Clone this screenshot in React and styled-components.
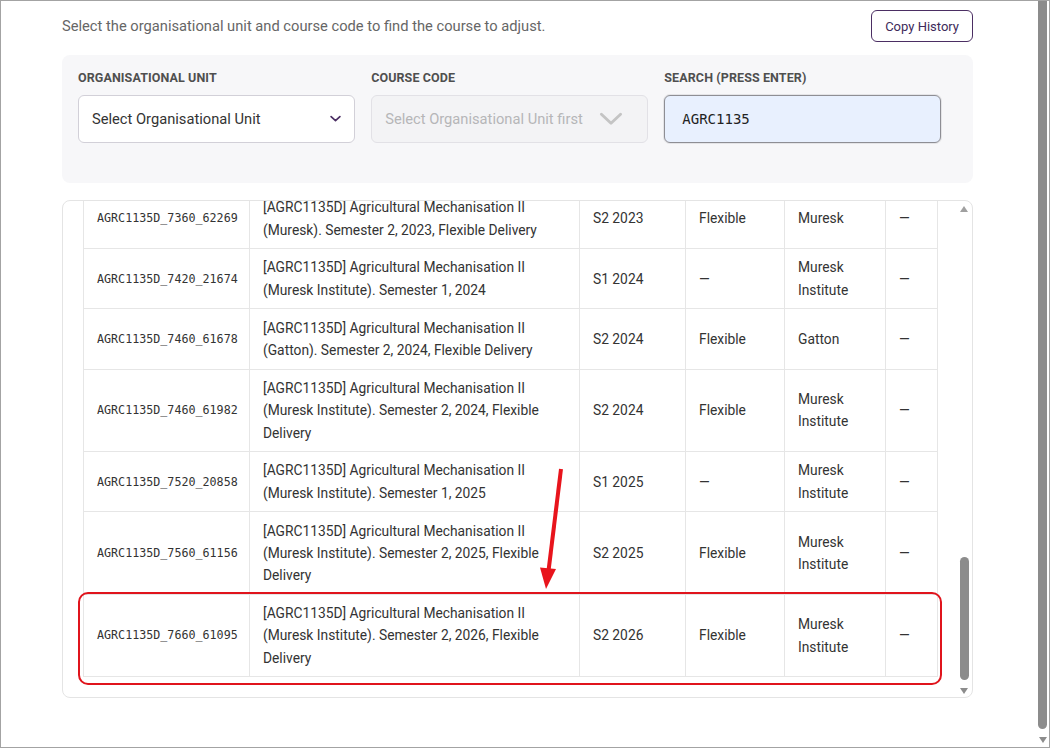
import React from "react";
import styled, { createGlobalStyle } from "styled-components";

const GlobalStyle = createGlobalStyle`
  html, body {
    margin: 0;
    padding: 0;
    overflow: hidden;
    background: #ffffff;
  }
  * {
    box-sizing: border-box;
  }
`;

const rows = [
  {
    code: "AGRC1135D_7360_62269",
    title:
      "[AGRC1135D] Agricultural Mechanisation II (Muresk). Semester 2, 2023, Flexible Delivery",
    term: "S2 2023",
    mode: "Flexible",
    campus: "Muresk",
  },
  {
    code: "AGRC1135D_7420_21674",
    title:
      "[AGRC1135D] Agricultural Mechanisation II (Muresk Institute). Semester 1, 2024",
    term: "S1 2024",
    mode: "—",
    campus: "Muresk Institute",
  },
  {
    code: "AGRC1135D_7460_61678",
    title:
      "[AGRC1135D] Agricultural Mechanisation II (Gatton). Semester 2, 2024, Flexible Delivery",
    term: "S2 2024",
    mode: "Flexible",
    campus: "Gatton",
  },
  {
    code: "AGRC1135D_7460_61982",
    title:
      "[AGRC1135D] Agricultural Mechanisation II (Muresk Institute). Semester 2, 2024, Flexible Delivery",
    term: "S2 2024",
    mode: "Flexible",
    campus: "Muresk Institute",
  },
  {
    code: "AGRC1135D_7520_20858",
    title:
      "[AGRC1135D] Agricultural Mechanisation II (Muresk Institute). Semester 1, 2025",
    term: "S1 2025",
    mode: "—",
    campus: "Muresk Institute",
  },
  {
    code: "AGRC1135D_7560_61156",
    title:
      "[AGRC1135D] Agricultural Mechanisation II (Muresk Institute). Semester 2, 2025, Flexible Delivery",
    term: "S2 2025",
    mode: "Flexible",
    campus: "Muresk Institute",
  },
  {
    code: "AGRC1135D_7660_61095",
    title:
      "[AGRC1135D] Agricultural Mechanisation II (Muresk Institute). Semester 2, 2026, Flexible Delivery",
    term: "S2 2026",
    mode: "Flexible",
    campus: "Muresk Institute",
  },
];

const colWidths = [166, 330, 106, 99, 101, 52];

function Chevron({ size, color, stroke }) {
  return (
    <svg width={size} height={size / 2 + 2} viewBox="0 0 20 11" fill="none">
      <path
        d="M2 1.5 L10 9 L18 1.5"
        stroke={color}
        strokeWidth={stroke}
        strokeLinecap="round"
        strokeLinejoin="round"
      />
    </svg>
  );
}

function App() {
  return (
    <>
      <GlobalStyle />
      <Frame>
        <Main>
          <Header>
            <Intro>
              Select the organisational unit and course code to find the course
              to adjust.
            </Intro>
            <OutlineButton>Copy History</OutlineButton>
          </Header>

          <FilterPanel>
            <Field>
              <Label>Organisational Unit</Label>
              <SelectBox>
                <span>Select Organisational Unit</span>
                <Chevron size={11} color="#4b2e63" stroke={3} />
              </SelectBox>
            </Field>
            <Field>
              <Label>Course Code</Label>
              <SelectBox disabled>
                <span>Select Organisational Unit first</span>
                <Chevron size={24} color="#c4c4c4" stroke={2.4} />
              </SelectBox>
            </Field>
            <Field>
              <Label>Search (press enter)</Label>
              <SearchInput readOnly value="AGRC1135" />
            </Field>
          </FilterPanel>

          <ResultsCard>
            <Viewport>
              <Table>
                <colgroup>
                  {colWidths.map((w, i) => (
                    <col key={i} style={{ width: w }} />
                  ))}
                </colgroup>
                <tbody>
                  {rows.map((r) => (
                    <tr key={r.code}>
                      <CodeCell>{r.code}</CodeCell>
                      <Cell>{r.title}</Cell>
                      <Cell>{r.term}</Cell>
                      <Cell>{r.mode}</Cell>
                      <Cell>{r.campus}</Cell>
                      <Cell>—</Cell>
                    </tr>
                  ))}
                </tbody>
              </Table>
            </Viewport>
            <InnerScroll>
              <ArrowUp />
              <ThumbTrack>
                <InnerThumb />
              </ThumbTrack>
              <ArrowDown />
            </InnerScroll>

            <Highlight />
            <ArrowMark width="45" height="135" viewBox="0 0 45 135">
              <line
                x1="31"
                y1="8"
                x2="18.5"
                y2="110"
                stroke="#e8141c"
                strokeWidth="4"
              />
              <polygon points="16,128 26,108 10,106.5" fill="#e8141c" />
            </ArrowMark>
          </ResultsCard>
        </Main>

        <PageScroll>
          <PageThumb />
          <ArrowDown />
        </PageScroll>
      </Frame>
    </>
  );
}

export default App;

const Frame = styled.div`
  width: 1050px;
  height: 748px;
  border: 1px solid #a3a3a3;
  display: flex;
  background: #fff;
  font-family: Roboto, "Liberation Sans", sans-serif;
  overflow: hidden;
`;

const Main = styled.div`
  flex: 1;
  padding: 9px 0 0 61px;
`;

const Header = styled.div`
  width: 911px;
  height: 32px;
  display: flex;
  align-items: center;
  justify-content: space-between;
`;

const Intro = styled.p`
  margin: 0;
  font-size: 14.7px;
  color: #666;
`;

const OutlineButton = styled.button`
  height: 32px;
  padding: 0 13px;
  border: 1px solid #4b2e63;
  border-radius: 6px;
  background: #fff;
  color: #3e2a5a;
  font-family: Roboto, "Liberation Sans", sans-serif;
  font-size: 13px;
  cursor: pointer;
`;

const FilterPanel = styled.div`
  width: 911px;
  margin-top: 13px;
  padding: 15px 32px 40px 16px;
  background: #f7f7f9;
  border-radius: 8px;
  display: grid;
  grid-template-columns: repeat(3, 1fr);
  column-gap: 16.5px;
`;

const Field = styled.div`
  display: flex;
  flex-direction: column;
`;

const Label = styled.label`
  font-size: 12.5px;
  line-height: 15px;
  font-weight: 700;
  text-transform: uppercase;
  color: #4f4f4f;
  letter-spacing: 0.1px;
  margin-bottom: 10px;
`;

const SelectBox = styled.div`
  height: 48px;
  display: flex;
  align-items: center;
  justify-content: space-between;
  padding: ${(p) => (p.disabled ? "0 24px 0 13px" : "0 13px 0 13px")};
  border: 1px solid ${(p) => (p.disabled ? "#e2e1e6" : "#d2d0d8")};
  border-radius: 6px;
  background: ${(p) => (p.disabled ? "#f3f3f5" : "#fff")};
  color: ${(p) => (p.disabled ? "#b6b6b8" : "#333")};
  font-size: 14.7px;
`;

const SearchInput = styled.input`
  height: 48px;
  padding: 0 17px;
  border: 1px solid #8e8e94;
  border-radius: 6px;
  background: #e8f0fe;
  box-shadow: 0 0 0 1px rgba(120, 120, 130, 0.15);
  font-family: "DejaVu Sans Mono", "Liberation Mono", monospace;
  font-size: 14px;
  color: #222;
  outline: none;
`;

const ResultsCard = styled.div`
  position: relative;
  width: 911px;
  height: 498px;
  margin-top: 17px;
  border: 1px solid #e4e4e4;
  border-radius: 8px;
  display: flex;
`;

const Viewport = styled.div`
  flex: 1;
  overflow: hidden;
  padding: 0 20px;
`;

const Table = styled.table`
  width: 854px;
  table-layout: fixed;
  border-collapse: collapse;
  margin-top: -13px;
`;

const Cell = styled.td`
  border: 1px solid #e6e6e6;
  padding: 7.25px 13px;
  font-size: 13.8px;
  line-height: 22.35px;
  color: #333;
  vertical-align: middle;
`;

const CodeCell = styled(Cell)`
  font-family: "DejaVu Sans Mono", "Liberation Mono", monospace;
  font-size: 11.7px;
  color: #333;
`;

const InnerScroll = styled.div`
  width: 14px;
  margin-right: 1px;
  padding: 5px 0 3px;
  display: flex;
  flex-direction: column;
  align-items: center;
`;

const ArrowUp = styled.div`
  width: 0;
  height: 0;
  border-left: 4.5px solid transparent;
  border-right: 4.5px solid transparent;
  border-bottom: 6px solid #a0a0a0;
`;

const ArrowDown = styled.div`
  width: 0;
  height: 0;
  border-left: 4.5px solid transparent;
  border-right: 4.5px solid transparent;
  border-top: 6px solid #8c8c8c;
`;

const ThumbTrack = styled.div`
  flex: 1;
  display: flex;
  flex-direction: column;
  justify-content: flex-end;
  padding-bottom: 8px;
`;

const InnerThumb = styled.div`
  width: 9px;
  height: 123px;
  border-radius: 5px;
  background: #8c8c8c;
`;

const Highlight = styled.div`
  position: absolute;
  left: 15px;
  top: 391px;
  width: 864px;
  height: 93px;
  border: 2.5px solid #e0141c;
  border-radius: 10px;
  pointer-events: none;
`;

const ArrowMark = styled.svg`
  position: absolute;
  left: 467px;
  top: 260px;
  pointer-events: none;
`;

const PageScroll = styled.div`
  width: 12px;
  padding: 0 1px 4px 0;
  display: flex;
  flex-direction: column;
  align-items: center;
  gap: 8px;
`;

const PageThumb = styled.div`
  width: 9px;
  flex: 1;
  background: #8c8c8c;
  border-radius: 0 0 5px 5px;
`;
